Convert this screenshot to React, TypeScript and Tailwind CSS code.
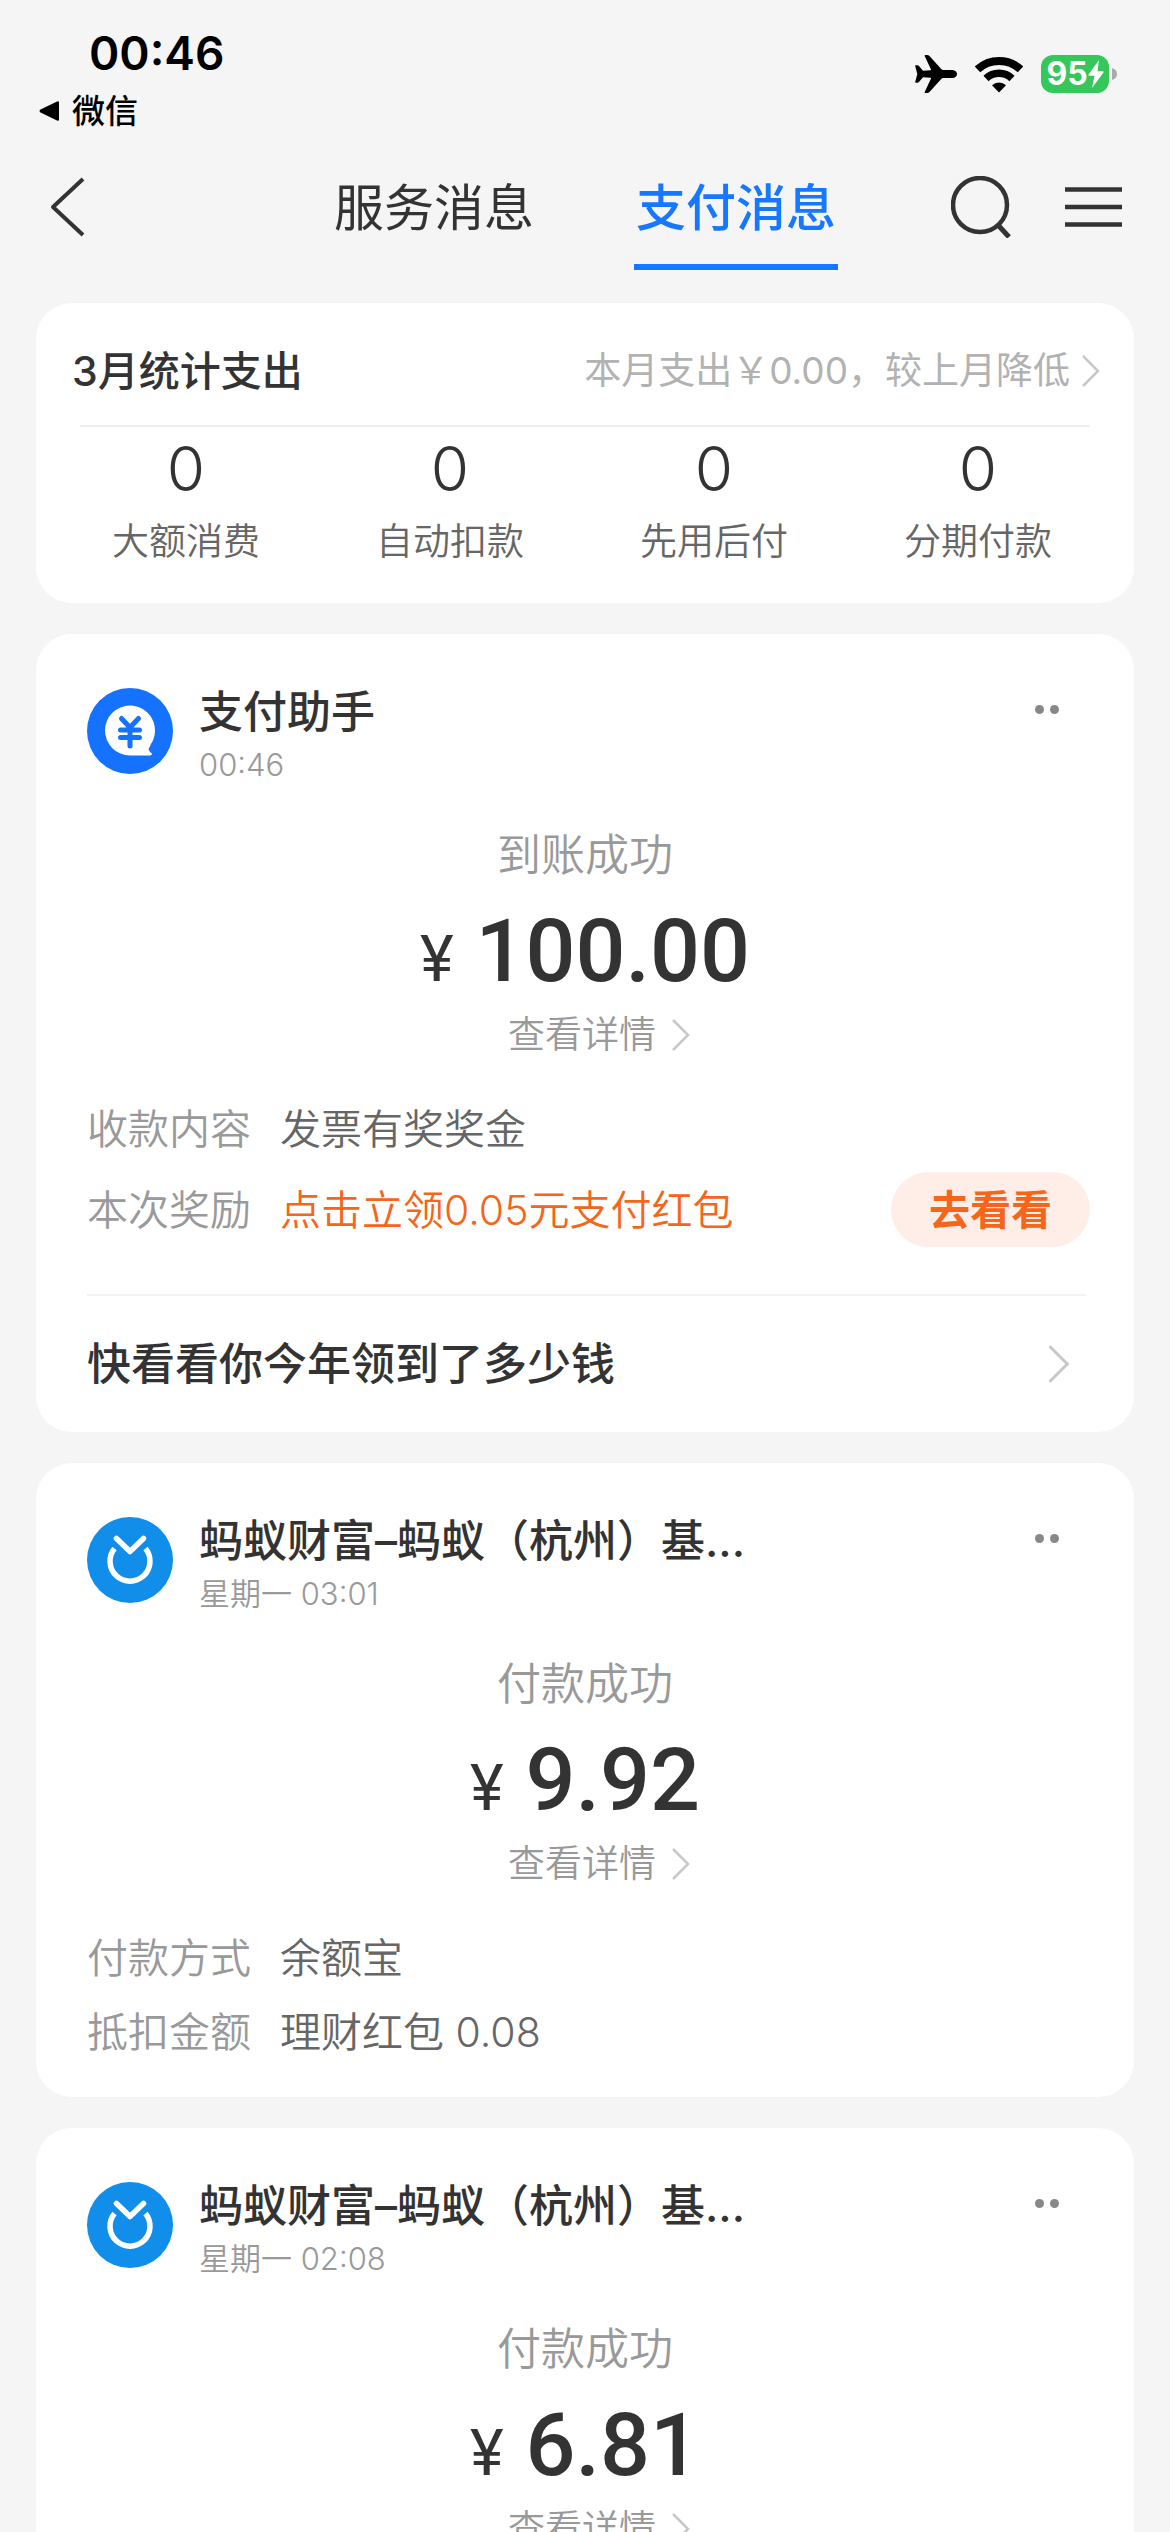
import React from "react";

function AirplaneIcon() {
  return (
    <svg className="h-[38px] w-[42px]" viewBox="0 0 42 38" fill="#000" aria-hidden="true">
      <path d="M38 15H28.5Q27 15 26 13.8L14.5 1Q13.500 0 12 0H10.300Q9.300 0 9.700 1L16 14.500Q16.200 15.200 15.500 15.300L8 15.800L4 11Q3.300 10.200 2.300 10.200H0.800Q0 10.200 0.200 11L2.300 19L0.200 27Q0 27.800 0.800 27.800H2.300Q3.300 27.800 4 27L8 22.200L15.500 22.700Q16.200 22.800 16 23.500L9.700 37Q9.300 38 10.300 38H12Q13.500 38 14.500 37L26 24.200Q27 23 28.500 23H38Q42 22 42 19Q42 16 38 15Z" />
    </svg>
  );
}

function WifiIcon() {
  return (
    <svg className="h-[37px] w-[48px]" viewBox="0 0 48 37" fill="none" stroke="#000" aria-hidden="true">
      <path d="M2.500 13.400A31.500 31.500 0 0 1 45.500 13.400" strokeWidth="8" />
      <path d="M11 22.400A19 19 0 0 1 37 22.400" strokeWidth="7.500" />
      <path d="M24 36.500L17 29.300A10 10 0 0 1 31 29.300Z" fill="#000" stroke="none" />
    </svg>
  );
}

function Battery() {
  return (
    <div className="flex items-center gap-[3px]">
      <div className="flex h-[38px] w-[68px] items-center justify-center rounded-xl bg-[#34c759] text-white">
        <span className="text-[32px] leading-[38px] font-bold">95</span>
        <svg className="h-[28px] w-[16px]" viewBox="0 0 16 28" fill="#fff" aria-hidden="true">
          <path d="M11 0L0.500 14.500Q0 15.500 1 15.700H6.500L4 28L15.500 12.500Q16 11.500 15 11.300H9.500Z" />
        </svg>
      </div>
      <svg className="h-[12px] w-[5px]" viewBox="0 0 5 12" fill="#a9aaac" aria-hidden="true">
        <path d="M0 0Q5 1.500 5 6Q5 10.500 0 12Z" />
      </svg>
    </div>
  );
}

function StatusBar() {
  return (
    <div className="flex h-[140px] items-start justify-between pr-[53px] pl-9 text-black">
      <div className="pt-[25px]">
        <div className="pl-[53px] text-[46px] leading-[56px] font-semibold">00:46</div>
        <a href="#wechat" className="mt-2 flex items-center gap-3 text-[33px] leading-[44px] font-medium">
          <svg className="h-[22px] w-[24px]" viewBox="0 0 24 22" aria-hidden="true">
            <path d="M4.500 9.500L21 1.500Q23 0.800 23 2.500V19.500Q23 21.200 21 20.500L4.500 12.500Q2.500 11 4.500 9.500Z" />
          </svg>
          微信
        </a>
      </div>
      <div className="flex items-center gap-[18px] pt-[55px]">
        <AirplaneIcon />
        <WifiIcon />
        <Battery />
      </div>
    </div>
  );
}

function NavBar() {
  return (
    <header className="grid grid-cols-[1fr_auto_1fr] items-start px-12">
      <button type="button" aria-label="返回" className="flex h-[130px] w-16 items-center pt-1">
        <svg className="h-[60px] w-[40px]" viewBox="0 0 40 60" fill="none" stroke="#333" strokeWidth="4" aria-hidden="true">
          <path d="M35 2L5 30L35 58" strokeLinejoin="round" />
        </svg>
      </button>
      <nav className="flex gap-[98px] text-[50px] leading-[60px]">
        <button type="button" className="border-b-[6px] border-transparent px-[2px] pt-[38px] pb-[26px] text-[#333]">
          服务消息
        </button>
        <button
          type="button"
          aria-current="page"
          className="border-b-[6px] border-[#1677ff] px-[2px] pt-[38px] pb-[26px] font-medium text-[#1677ff]"
        >
          支付消息
        </button>
      </nav>
      <div className="flex h-[130px] items-center justify-end gap-[52px] pt-1">
        <button type="button" aria-label="搜索">
          <svg className="h-[62px] w-[62px]" viewBox="0 0 62 62" fill="none" stroke="#333" strokeWidth="4.500" aria-hidden="true">
            <circle cx="29" cy="29" r="27" />
            <path d="M47 49L58 61" strokeWidth="5" />
          </svg>
        </button>
        <button type="button" aria-label="菜单">
          <svg className="h-[40px] w-[57px]" viewBox="0 0 57 40" fill="none" stroke="#333" strokeWidth="4.500" aria-hidden="true">
            <path d="M0 2.500H57M0 20H57M0 37.500H57" />
          </svg>
        </button>
      </div>
    </header>
  );
}

function Chevron({ className }: { className: string }) {
  return (
    <svg className={className} viewBox="0 0 18 32" fill="none" stroke="#c8c8c8" strokeWidth="2.500" aria-hidden="true">
      <path d="M1 1L16 16L1 31" />
    </svg>
  );
}

const stats = [
  { label: "大额消费", value: 0 },
  { label: "自动扣款", value: 0 },
  { label: "先用后付", value: 0 },
  { label: "分期付款", value: 0 },
];

function SummaryCard() {
  return (
    <section className="rounded-[36px] bg-white pb-9">
      <div className="flex items-center justify-between pt-[37px] pr-[34px] pb-[23px] pl-9">
        <h2 className="text-[41px] leading-[62px] font-medium text-[#333]">3月统计支出</h2>
        <a href="#bill" className="flex items-center gap-3 text-[37px] leading-[62px] text-[#b2b2b2]">
          本月支出￥0.00，较上月降低
          <Chevron className="h-[32px] w-[18px]" />
        </a>
      </div>
      <hr className="mx-11 border-t-2 border-[#eee]" />
      <dl className="grid grid-cols-4 pr-[24px] pl-[18px] text-center">
        {stats.map((s) => (
          <div key={s.label} className="flex flex-col-reverse">
            <dt className="text-[37px] leading-[50px] font-[350] text-[#666]">{s.label}</dt>
            <dd className="pt-[6px] pb-3 text-[62px] leading-[72px] font-[350] text-[#333]">{s.value}</dd>
          </div>
        ))}
      </dl>
    </section>
  );
}

function AssistantAvatar() {
  return (
    <svg className="h-[86px] w-[86px] shrink-0" viewBox="0 0 86 86" aria-hidden="true">
      <circle cx="43" cy="43" r="43" fill="#1472ff" />
      <path
        d="M43 17.500A25 25 0 0 1 64 56Q62.500 59 61.500 61.500Q62.500 64 65 65.500Q65 67.500 62 67.500H43A25 25 0 0 1 43 17.500Z"
        fill="#fff"
      />
      <path
        d="M34.500 30.500L43 39.500L51.500 30.500M33.500 42H52.500M33.500 49.500H52.500M43 40V58"
        fill="none"
        stroke="#1472ff"
        strokeWidth="5"
        strokeLinecap="round"
      />
    </svg>
  );
}

function FortuneAvatar() {
  return (
    <svg className="h-[86px] w-[86px] shrink-0" viewBox="0 0 86 86" aria-hidden="true">
      <circle cx="43" cy="43" r="43" fill="#118ee9" />
      <g fill="none" stroke="#fff" strokeWidth="5.500">
        <path d="M27.500 31.500A20 20 0 1 0 58.500 31.500" strokeLinecap="butt" />
        <path d="M29.500 21.500L43 34.500L56.500 21.500" strokeLinecap="round" strokeLinejoin="round" />
      </g>
    </svg>
  );
}

type Row = { label: string; value: string; action?: string };

type Message = {
  id: string;
  avatar: React.ReactNode;
  name: string;
  time: string;
  status: string;
  amount: string;
  rows: Row[];
  footer?: string;
};

const messages: Message[] = [
  {
    id: "assistant",
    avatar: <AssistantAvatar />,
    name: "支付助手",
    time: "00:46",
    status: "到账成功",
    amount: "100.00",
    rows: [
      { label: "收款内容", value: "发票有奖奖金" },
      { label: "本次奖励", value: "点击立领0.05元支付红包", action: "去看看" },
    ],
    footer: "快看看你今年领到了多少钱",
  },
  {
    id: "fund-0301",
    avatar: <FortuneAvatar />,
    name: "蚂蚁财富–蚂蚁（杭州）基...",
    time: "星期一 03:01",
    status: "付款成功",
    amount: "9.92",
    rows: [
      { label: "付款方式", value: "余额宝" },
      { label: "抵扣金额", value: "理财红包 0.08" },
    ],
  },
  {
    id: "fund-0208",
    avatar: <FortuneAvatar />,
    name: "蚂蚁财富–蚂蚁（杭州）基...",
    time: "星期一 02:08",
    status: "付款成功",
    amount: "6.81",
    rows: [],
  },
];

function MessageCard({ message }: { message: Message }) {
  return (
    <article className="rounded-[36px] bg-white pt-[50px]">
      <div className="flex items-start pr-[69px] pl-[51px]">
        <div className="pt-1">{message.avatar}</div>
        <div className="min-w-0 flex-1 pl-[26px]">
          <h3 className="truncate text-[44px] leading-[56px] font-medium text-[#333]">{message.name}</h3>
          <p className="text-[31px] leading-[50px] font-[350] text-[#999]">{message.time}</p>
        </div>
        <button type="button" aria-label="更多" className="flex h-[50px] items-center gap-[6px] px-[6px]">
          <span className="size-[9px] rounded-full bg-[#888]" />
          <span className="size-[9px] rounded-full bg-[#888]" />
        </button>
      </div>

      <div className="flex flex-col items-center pt-[34px]">
        <p className="text-[44px] leading-[62px] font-[350] text-[#999]">{message.status}</p>
        <p className="flex items-baseline gap-[22px] pt-5 font-[Roboto] text-[#333]">
          <span className="text-[64px] leading-[60px]">¥</span>
          <span className="text-[88px] leading-[90px] font-medium">{message.amount}</span>
        </p>
        <a href="#detail" className="mt-[14px] flex items-center gap-4 pl-[28px] text-[37px] leading-[50px] font-[350] text-[#999]">
          查看详情
          <Chevron className="h-[32px] w-[18px]" />
        </a>
      </div>

      <dl className="flex flex-col gap-3 pt-[38px] pr-11 pb-[34px] pl-[51px] text-[41px] leading-[62px] font-[350]">
        {message.rows.map((row) => (
          <div key={row.label} className="flex items-center">
            <dt className="w-[193px] text-[#999]">{row.label}</dt>
            <dd className={row.action ? "flex flex-1 items-center justify-between text-[#f5651a]" : "text-[#666]"}>
              {row.value}
              {row.action && (
                <button type="button" className="h-[75px] rounded-full bg-[#ffeee8] px-[38px] font-bold text-[#f5651a]">
                  {row.action}
                </button>
              )}
            </dd>
          </div>
        ))}
      </dl>

      {message.footer && (
        <div className="pt-[13px] pr-12 pl-[51px]">
          <a
            href="#summary"
            className="flex items-center justify-between border-t-2 border-[#f3f3f3] py-[37px] pr-4 text-[44px] leading-[62px] font-medium text-[#333]"
          >
            {message.footer}
            <Chevron className="h-[38px] w-[22px]" />
          </a>
        </div>
      )}
    </article>
  );
}

export default function App() {
  return (
    <div className="min-h-screen bg-[#f5f5f5] font-[Inter,'Noto_Sans_CJK_SC',sans-serif]">
      <StatusBar />
      <NavBar />
      <main className="flex flex-col gap-[31px] px-9 pt-[33px]">
        <SummaryCard />
        {messages.map((m) => (
          <MessageCard key={m.id} message={m} />
        ))}
      </main>
    </div>
  );
}
